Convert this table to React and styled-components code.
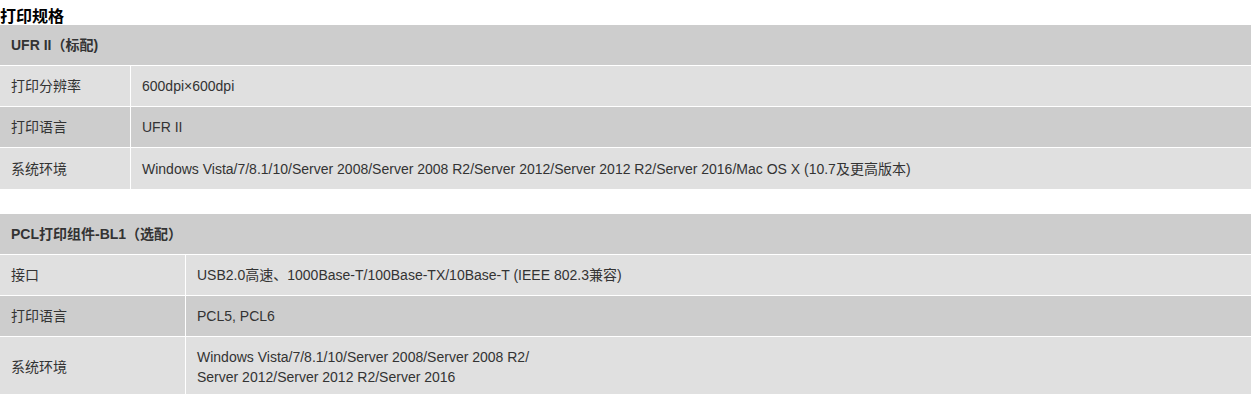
import React from "react";
import styled, { createGlobalStyle } from "styled-components";

const GlobalStyle = createGlobalStyle`
  body {
    margin: 0;
    background: #fff;
    font-family: "Liberation Sans", Arial, "Noto Sans CJK SC", sans-serif;
    color: #333;
  }
`;

const specs = [
  {
    title: "UFR II（标配)",
    labelWidth: 131,
    rows: [
      ["打印分辨率", "600dpi×600dpi"],
      ["打印语言", "UFR II"],
      [
        "系统环境",
        "Windows Vista/7/8.1/10/Server 2008/Server 2008 R2/Server 2012/Server 2012 R2/Server 2016/Mac OS X (10.7及更高版本)",
      ],
    ],
  },
  {
    title: "PCL打印组件-BL1（选配）",
    labelWidth: 186,
    rows: [
      ["接口", "USB2.0高速、1000Base-T/100Base-TX/10Base-T (IEEE 802.3兼容)"],
      ["打印语言", "PCL5, PCL6"],
      [
        "系统环境",
        ["Windows Vista/7/8.1/10/Server 2008/Server 2008 R2/", "Server 2012/Server 2012 R2/Server 2016"],
      ],
    ],
  },
];

const Page = styled.div`
  width: 1251px;
`;

const Title = styled.h3`
  margin: 0;
  padding-top: 5px;
  height: 25px;
  box-sizing: border-box;
  font-size: 16px;
  line-height: 20px;
  font-weight: bold;
  font-family: "Noto Sans CJK SC", sans-serif;
  color: #000;
`;

const SpecTable = styled.table`
  width: 100%;
  border-collapse: separate;
  border-spacing: 0;
  margin-bottom: ${(p) => (p.$last ? "0" : "25px")};
  font-size: 14px;
  line-height: 20px;
`;

const HeadCell = styled.th`
  background: #cdcdcd;
  text-align: left;
  font-weight: bold;
  color: #333;
  height: 41px;
  box-sizing: border-box;
  padding: 0 11px;
  border-bottom: 1px solid #fff;
`;

const Row = styled.tr`
  background: ${(p) => (p.$dark ? "#cdcdcd" : "#e0e0e0")};
`;

const Cell = styled.td`
  height: 41px;
  padding: 10px 11px;
  box-sizing: border-box;
  color: #333;
  border-bottom: ${(p) => (p.$lastRow ? "none" : "1px solid #fff")};
`;

const LabelCell = styled(Cell)`
  width: ${(p) => p.$width}px;
  border-right: 1px solid #fff;
`;

function Section({ data, last }) {
  return (
    <SpecTable $last={last}>
      <thead>
        <tr>
          <HeadCell colSpan={2}>{data.title}</HeadCell>
        </tr>
      </thead>
      <tbody>
        {data.rows.map(([label, value], i) => {
          const lastRow = i === data.rows.length - 1;
          return (
            <Row key={label} $dark={i % 2 === 1}>
              <LabelCell $width={data.labelWidth} $lastRow={lastRow}>
                {label}
              </LabelCell>
              <Cell $lastRow={lastRow}>
                {Array.isArray(value)
                  ? value.map((line, j) => (
                      <React.Fragment key={j}>
                        {line}
                        {j < value.length - 1 && <br />}
                      </React.Fragment>
                    ))
                  : value}
              </Cell>
            </Row>
          );
        })}
      </tbody>
    </SpecTable>
  );
}

export default function App() {
  return (
    <Page>
      <GlobalStyle />
      <Title>打印规格</Title>
      {specs.map((s, i) => (
        <Section key={s.title} data={s} last={i === specs.length - 1} />
      ))}
    </Page>
  );
}
